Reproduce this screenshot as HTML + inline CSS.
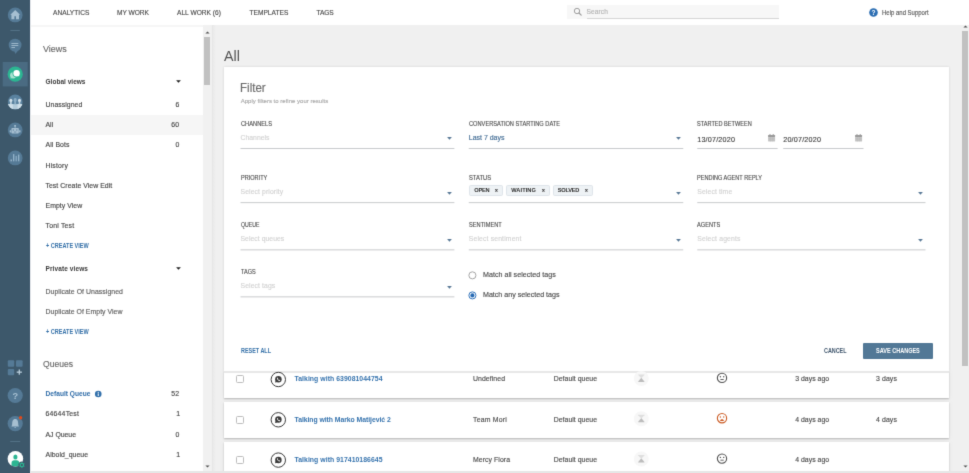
<!DOCTYPE html>
<html><head><meta charset="utf-8"><title>All</title>
<style>
html,body{margin:0;padding:0;}
body{width:969px;height:473px;overflow:hidden;position:relative;background:#f0f0f0;font-family:"Liberation Sans", sans-serif;}
.t{position:absolute;white-space:nowrap;font-family:"Liberation Sans", sans-serif;-webkit-text-stroke:0.14px;}
.b{position:absolute;}
svg{position:absolute;overflow:visible;}
</style></head><body>
<svg width="0" height="0" style="position:absolute"><defs><filter id="soft" x="0" y="0" width="100%" height="100%" color-interpolation-filters="sRGB"><feConvolveMatrix order="3" kernelMatrix="0.0121 0.0858 0.0121 0.0858 0.6084 0.0858 0.0121 0.0858 0.0121" edgeMode="duplicate" preserveAlpha="true"/></filter></defs></svg>
<div id="page" style="position:absolute;left:0;top:0;width:969px;height:473px;overflow:hidden;background:#f0f0f0;filter:url(#soft);">
<!-- main bg -->
<div class="b" style="left:211.5px;top:25px;width:757.5px;height:448px;background:#f0f0f0;"></div>
<div class="b" style="left:211.5px;top:25px;width:4px;height:446px;background:linear-gradient(to right,#e5e5e5,#ebebeb 40%,#f0f0f0);"></div>
<!-- top bar -->
<div class="b" style="left:30px;top:0;width:939px;height:25px;background:#fff;"></div>
<div class="b" style="left:30px;top:25px;width:173.3px;height:2px;background:#f6f6f6;"></div>
<!-- search -->
<div class="b" style="left:567px;top:4.5px;width:212.25px;height:14px;background:#f7f7f7;"></div>
<div class="b" style="left:586.5px;top:17.8px;width:192.75px;height:0.9px;background:#d6d6d6;"></div>
<svg style="left:572.5px;top:7px;" width="9" height="9" viewBox="0 0 9 9"><circle cx="4" cy="4" r="2.7" fill="none" stroke="#9a9a9a" stroke-width="0.95"/><path d="M6 6 L8.2 8.2" stroke="#9a9a9a" stroke-width="1.15" stroke-linecap="round"/></svg>
<!-- help icon -->
<svg style="left:868.6px;top:8px;" width="9" height="9" viewBox="0 0 9 9"><circle cx="4.5" cy="4.5" r="4.3" fill="#2d6fb3"/><text x="4.5" y="6.9" font-size="6.6" font-weight="700" fill="#fff" text-anchor="middle" font-family="Liberation Sans, sans-serif">?</text></svg>

<!-- sidebar -->
<div class="b" style="left:30px;top:27px;width:173.3px;height:444px;background:#fff;"></div>
<div class="b" style="left:30px;top:115px;width:173.3px;height:19.5px;background:#f6f6f6;"></div>
<!-- sidebar scrollbar -->
<div class="b" style="left:203.3px;top:25px;width:8.2px;height:446px;background:#f1f1f1;"></div>
<div class="b" style="left:204.3px;top:36.8px;width:6.1px;height:47.8px;background:#c1c1c1;"></div>
<svg style="left:205px;top:31px;" width="5" height="3" viewBox="0 0 5 3"><path d="M0.4 2.6 L2.5 0.4 L4.6 2.6 Z" fill="#505050"/></svg>
<svg style="left:205px;top:464.5px;" width="5" height="3" viewBox="0 0 5 3"><path d="M0.4 0.4 L2.5 2.6 L4.6 0.4 Z" fill="#505050"/></svg>
<!-- sidebar carets -->
<svg style="left:175.6px;top:80.3px;" width="5" height="3" viewBox="0 0 5 3"><path d="M0.1 0.2 L4.9 0.2 L2.5 2.7 Z" fill="#1f1f1f"/></svg>
<svg style="left:175.6px;top:267.1px;" width="5" height="3" viewBox="0 0 5 3"><path d="M0.1 0.2 L4.9 0.2 L2.5 2.7 Z" fill="#1f1f1f"/></svg>
<!-- info icon -->
<svg style="left:94px;top:390px;" width="9" height="9" viewBox="0 0 9 9"><g transform="translate(0.75 0.5)"><circle cx="3.5" cy="3.5" r="3.3" fill="#3270ab"/><rect x="3" y="2.9" width="1" height="2.6" fill="#fff"/><rect x="3" y="1.4" width="1" height="1" fill="#fff"/></g></svg>

<!-- rows -->
<div class="b row" style="left:224px;top:371px;width:724.6px;height:27px;background:#fff;box-shadow:0 1px 1.5px rgba(0,0,0,.22),0 0 6px rgba(0,0,0,.05);"></div>
<div class="b row" style="left:224px;top:402px;width:724.6px;height:36px;background:#fff;box-shadow:0 1px 1.5px rgba(0,0,0,.22),0 0 6px rgba(0,0,0,.05);"></div>
<div class="b row" style="left:224px;top:442px;width:724.6px;height:36px;background:#fff;box-shadow:0 1px 1.5px rgba(0,0,0,.22),0 0 6px rgba(0,0,0,.05);"></div>

<!-- filter card -->
<div class="b" style="left:224px;top:67px;width:725px;height:304.2px;background:#fff;box-shadow:0 0 2.5px rgba(0,0,0,.13);"></div>
<div class="b" style="left:224px;top:371.1px;width:725px;height:1.6px;background:#e7e7e7;"></div>
<svg class="nb" style="left:0;top:0;" width="969" height="473"><rect x="240.5" y="148.00" width="213.90" height="1.0" fill="#c8cacd"/><rect x="240.5" y="202.12" width="213.90" height="1.0" fill="#c8cacd"/><rect x="240.5" y="249.35" width="213.90" height="1.0" fill="#c8cacd"/><rect x="240.5" y="296.35" width="213.90" height="1.0" fill="#c8cacd"/><rect x="468.75" y="148.00" width="214.50" height="1.0" fill="#c8cacd"/><rect x="468.75" y="202.12" width="214.50" height="1.0" fill="#c8cacd"/><rect x="468.75" y="249.35" width="214.50" height="1.0" fill="#c8cacd"/><rect x="697.25" y="148.00" width="80.35" height="1.0" fill="#c8cacd"/><rect x="783.2" y="148.00" width="80.30" height="1.0" fill="#c8cacd"/><rect x="697.25" y="202.12" width="228.25" height="1.0" fill="#c8cacd"/><rect x="697.25" y="249.35" width="228.25" height="1.0" fill="#c8cacd"/></svg>
<svg style="left:447.3px;top:137.00px;" width="5" height="3" viewBox="0 0 5 3"><path d="M0.1 0.1 L4.9 0.1 L2.5 2.8 Z" fill="#587896"/></svg>
<svg style="left:447.3px;top:191.60px;" width="5" height="3" viewBox="0 0 5 3"><path d="M0.1 0.1 L4.9 0.1 L2.5 2.8 Z" fill="#587896"/></svg>
<svg style="left:447.3px;top:238.70px;" width="5" height="3" viewBox="0 0 5 3"><path d="M0.1 0.1 L4.9 0.1 L2.5 2.8 Z" fill="#587896"/></svg>
<svg style="left:447.3px;top:285.70px;" width="5" height="3" viewBox="0 0 5 3"><path d="M0.1 0.1 L4.9 0.1 L2.5 2.8 Z" fill="#587896"/></svg>
<svg style="left:676px;top:137.00px;" width="5" height="3" viewBox="0 0 5 3"><path d="M0.1 0.1 L4.9 0.1 L2.5 2.8 Z" fill="#587896"/></svg>
<svg style="left:676px;top:191.60px;" width="5" height="3" viewBox="0 0 5 3"><path d="M0.1 0.1 L4.9 0.1 L2.5 2.8 Z" fill="#587896"/></svg>
<svg style="left:676px;top:238.70px;" width="5" height="3" viewBox="0 0 5 3"><path d="M0.1 0.1 L4.9 0.1 L2.5 2.8 Z" fill="#587896"/></svg>
<svg style="left:918.3px;top:191.60px;" width="5" height="3" viewBox="0 0 5 3"><path d="M0.1 0.1 L4.9 0.1 L2.5 2.8 Z" fill="#587896"/></svg>
<svg style="left:918.3px;top:238.70px;" width="5" height="3" viewBox="0 0 5 3"><path d="M0.1 0.1 L4.9 0.1 L2.5 2.8 Z" fill="#587896"/></svg>
<svg style="left:768.1px;top:134.2px;" width="7.2" height="7.7" viewBox="0 0 7.2 7.7">
<rect x="0.1" y="0.9" width="7" height="6.7" rx="0.6" fill="#c6c6c6"/>
<rect x="0.1" y="0.9" width="7" height="2" rx="0.6" fill="#9a9a9a"/>
<rect x="1.4" y="0" width="1.2" height="1.8" rx="0.5" fill="#9a9a9a"/>
<rect x="4.6" y="0" width="1.2" height="1.8" rx="0.5" fill="#9a9a9a"/>
<path d="M2.45 3 V7.5 M4.75 3 V7.5 M0.2 4.6 H7 M0.2 6.1 H7" stroke="#b4b4b4" stroke-width="0.35"/>
</svg>
<svg style="left:854.6px;top:134.2px;" width="7.2" height="7.7" viewBox="0 0 7.2 7.7">
<rect x="0.1" y="0.9" width="7" height="6.7" rx="0.6" fill="#c6c6c6"/>
<rect x="0.1" y="0.9" width="7" height="2" rx="0.6" fill="#9a9a9a"/>
<rect x="1.4" y="0" width="1.2" height="1.8" rx="0.5" fill="#9a9a9a"/>
<rect x="4.6" y="0" width="1.2" height="1.8" rx="0.5" fill="#9a9a9a"/>
<path d="M2.45 3 V7.5 M4.75 3 V7.5 M0.2 4.6 H7 M0.2 6.1 H7" stroke="#b4b4b4" stroke-width="0.35"/>
</svg>
<div class="b" style="left:468.6px;top:185px;width:32.70px;height:9px;background:#eef2f5;border:1px solid #dfe5ea;border-radius:1.6px;"></div>
<svg style="left:495.20px;top:188.9px;" width="2.8" height="2.8" viewBox="0 0 2.8 2.8"><path d="M0.3 0.3 L2.5 2.5 M2.5 0.3 L0.3 2.5" stroke="#2a2a2a" stroke-width="1.05"/></svg>
<div class="b" style="left:506.2px;top:185px;width:41.60px;height:9px;background:#eef2f5;border:1px solid #dfe5ea;border-radius:1.6px;"></div>
<svg style="left:541.60px;top:188.9px;" width="2.8" height="2.8" viewBox="0 0 2.8 2.8"><path d="M0.3 0.3 L2.5 2.5 M2.5 0.3 L0.3 2.5" stroke="#2a2a2a" stroke-width="1.05"/></svg>
<div class="b" style="left:552.7px;top:185px;width:38.30px;height:9px;background:#eef2f5;border:1px solid #dfe5ea;border-radius:1.6px;"></div>
<svg style="left:585.10px;top:188.9px;" width="2.8" height="2.8" viewBox="0 0 2.8 2.8"><path d="M0.3 0.3 L2.5 2.5 M2.5 0.3 L0.3 2.5" stroke="#2a2a2a" stroke-width="1.05"/></svg>
<svg style="left:466px;top:269px;" width="13" height="13" viewBox="0 0 13 13"><circle cx="6.4" cy="6.35" r="3.55" fill="#fff" stroke="#a6a6a6" stroke-width="1"/></svg>
<svg style="left:466px;top:289px;" width="13" height="13" viewBox="0 0 13 13"><circle cx="6.4" cy="6.4" r="3.55" fill="#fff" stroke="#3576bd" stroke-width="1"/><circle cx="6.4" cy="6.4" r="2.05" fill="#2569b3"/></svg>
<div class="b" style="left:863.4px;top:343px;width:69.4px;height:16.4px;background:#527896;border-radius:1px;"></div>
<div class="b" style="left:236.3px;top:375.40px;width:6.1px;height:6.1px;border:1px solid #bcbcbc;border-radius:1.5px;background:#fff;"></div>
<div class="b" style="left:236.3px;top:415.70px;width:6.1px;height:6.1px;border:1px solid #bcbcbc;border-radius:1.5px;background:#fff;"></div>
<div class="b" style="left:236.3px;top:456.00px;width:6.1px;height:6.1px;border:1px solid #bcbcbc;border-radius:1.5px;background:#fff;"></div>
<svg style="left:269px;top:370px;" width="19" height="19" viewBox="0 0 19 19"><g transform="translate(1.30 1.50)">
<circle cx="8" cy="8" r="7.2" fill="#fff" stroke="#3a3a3a" stroke-width="1"/>
<circle cx="8.1" cy="7.8" r="3.25" fill="#3a3a3a"/>
<path d="M4.7 11.1 L5.4 8.9 L7.1 10.6 Z" fill="#3a3a3a"/>
<path d="M6.7 6.4 C6.6 7.8 7.9 9.3 9.5 9.4 L9.9 8.7 L9.1 8.2 L8.7 8.5 C8.2 8.3 7.7 7.8 7.6 7.3 L7.9 6.9 L7.4 6.1 Z" fill="#fff"/>
</g></svg>
<svg style="left:269px;top:410px;" width="19" height="19" viewBox="0 0 19 19"><g transform="translate(1.30 1.80)">
<circle cx="8" cy="8" r="7.2" fill="#fff" stroke="#3a3a3a" stroke-width="1"/>
<circle cx="8.1" cy="7.8" r="3.25" fill="#3a3a3a"/>
<path d="M4.7 11.1 L5.4 8.9 L7.1 10.6 Z" fill="#3a3a3a"/>
<path d="M6.7 6.4 C6.6 7.8 7.9 9.3 9.5 9.4 L9.9 8.7 L9.1 8.2 L8.7 8.5 C8.2 8.3 7.7 7.8 7.6 7.3 L7.9 6.9 L7.4 6.1 Z" fill="#fff"/>
</g></svg>
<svg style="left:269px;top:451px;" width="19" height="19" viewBox="0 0 19 19"><g transform="translate(1.30 1.10)">
<circle cx="8" cy="8" r="7.2" fill="#fff" stroke="#3a3a3a" stroke-width="1"/>
<circle cx="8.1" cy="7.8" r="3.25" fill="#3a3a3a"/>
<path d="M4.7 11.1 L5.4 8.9 L7.1 10.6 Z" fill="#3a3a3a"/>
<path d="M6.7 6.4 C6.6 7.8 7.9 9.3 9.5 9.4 L9.9 8.7 L9.1 8.2 L8.7 8.5 C8.2 8.3 7.7 7.8 7.6 7.3 L7.9 6.9 L7.4 6.1 Z" fill="#fff"/>
</g></svg>
<svg style="left:632px;top:369px;" width="19" height="19" viewBox="0 0 19 19"><g transform="translate(1.60 1.70)">
<circle cx="7.7" cy="7.7" r="7.5" fill="#f7f7f7"/>
<path d="M4.6 3.7 H10.8 V4.2 L7.9 7.3 H7.5 L4.6 4.2 Z" fill="#dedede"/>
<path d="M4.6 11.3 H10.8 V10.8 L7.9 7.3 H7.5 L4.6 10.8 Z" fill="#bcbcbc"/>
</g></svg>
<svg style="left:632px;top:410px;" width="19" height="18" viewBox="0 0 19 18"><g transform="translate(1.60 1.00)">
<circle cx="7.7" cy="7.7" r="7.5" fill="#f7f7f7"/>
<path d="M4.6 3.7 H10.8 V4.2 L7.9 7.3 H7.5 L4.6 4.2 Z" fill="#dedede"/>
<path d="M4.6 11.3 H10.8 V10.8 L7.9 7.3 H7.5 L4.6 10.8 Z" fill="#bcbcbc"/>
</g></svg>
<svg style="left:632px;top:450px;" width="19" height="18" viewBox="0 0 19 18"><g transform="translate(1.60 1.30)">
<circle cx="7.7" cy="7.7" r="7.5" fill="#f7f7f7"/>
<path d="M4.6 3.7 H10.8 V4.2 L7.9 7.3 H7.5 L4.6 4.2 Z" fill="#dedede"/>
<path d="M4.6 11.3 H10.8 V10.8 L7.9 7.3 H7.5 L4.6 10.8 Z" fill="#bcbcbc"/>
</g></svg>
<svg style="left:715px;top:370px;" width="14" height="15" viewBox="0 0 14 15"><g transform="translate(1.00 1.90)">
<circle cx="6" cy="6" r="4.65" fill="#fff" stroke="#505050" stroke-width="1.1"/>
<circle cx="4.4" cy="4.8" r="0.7" fill="#505050"/><circle cx="7.7" cy="4.8" r="0.7" fill="#505050"/>
<rect x="4.4" y="7.1" width="3.3" height="0.9" fill="#505050"/>
</g></svg>
<svg style="left:715px;top:411px;" width="14" height="15" viewBox="0 0 14 15"><g transform="translate(1.00 1.20)">
<circle cx="6" cy="6" r="4.65" fill="#fff" stroke="#cb5a22" stroke-width="1.1"/>
<circle cx="4.4" cy="4.8" r="0.7" fill="#cb5a22"/><circle cx="7.7" cy="4.8" r="0.7" fill="#cb5a22"/>
<path d="M4.1 8.9 C4.1 6.4 7.9 6.4 7.9 8.9 Z" fill="#cb5a22"/>
</g></svg>
<svg style="left:715px;top:451px;" width="14" height="15" viewBox="0 0 14 15"><g transform="translate(1.00 1.60)">
<circle cx="6" cy="6" r="4.65" fill="#fff" stroke="#505050" stroke-width="1.1"/>
<circle cx="4.4" cy="4.8" r="0.7" fill="#505050"/><circle cx="7.7" cy="4.8" r="0.7" fill="#505050"/>
<rect x="4.4" y="7.1" width="3.3" height="0.9" fill="#505050"/>
</g></svg>

<!-- right scrollbar -->
<div class="b" style="left:958px;top:25px;width:11px;height:446px;background:#f0f0f0;"></div>
<div class="b" style="left:962px;top:31.2px;width:6.2px;height:334.6px;background:#c1c1c1;"></div>
<svg style="left:962.8px;top:25.4px;" width="5" height="3" viewBox="0 0 5 3"><path d="M0.4 2.6 L2.5 0.4 L4.6 2.6 Z" fill="#505050"/></svg>
<svg style="left:962.8px;top:464.5px;" width="5" height="3" viewBox="0 0 5 3"><path d="M0.4 0.4 L2.5 2.6 L4.6 0.4 Z" fill="#505050"/></svg>

<!-- bottom strip -->
<div class="b" style="left:30px;top:471px;width:939px;height:2px;background:#e6e6e6;"></div>

<!-- left nav -->
<div class="b" style="left:0;top:0;width:30px;height:473px;background:#3d586b;"></div>
<div class="b" style="left:28.6px;top:0;width:1.4px;height:473px;background:linear-gradient(to right,#3d586b,#36506a);"></div><div class="b" style="left:30px;top:0;width:1px;height:473px;background:#eef0f2;"></div>
<svg style="left:0;top:0;" width="30" height="473" viewBox="0 0 30 473">
  <defs>
    <clipPath id="cpPeople"><circle cx="15.2" cy="101.9" r="7.4"/></clipPath>
    <clipPath id="cpAv"><circle cx="15.4" cy="458.7" r="7.8"/></clipPath>
  </defs>
  <!-- home -->
  <circle cx="15.2" cy="14.9" r="7.4" fill="#557a96"/>
  <path d="M15.2 10 L20.1 14.8 L19 14.8 L19 19.2 L16 19.2 L16 16.3 L14.4 16.3 L14.4 19.2 L11.4 19.2 L11.4 14.8 L10.3 14.8 Z" fill="#a6bfd1"/>
  <!-- separator -->
  <rect x="10.4" y="30.1" width="9.4" height="0.9" fill="#56748a"/>
  <!-- chat bubble -->
  <circle cx="15.1" cy="45.1" r="6.4" fill="#557a96"/>
  <path d="M14.2 50.9 L15.5 54.1 L18.2 50 Z" fill="#557a96"/>
  <rect x="11.4" y="43" width="6.9" height="0.9" fill="#a6bfd1"/>
  <rect x="11.4" y="45.05" width="6.9" height="0.9" fill="#a6bfd1"/>
  <rect x="11.4" y="47.1" width="3.6" height="0.9" fill="#a6bfd1"/>
  <!-- active -->
  <rect x="2.7" y="62" width="25" height="24.4" fill="#4a6b82"/>
  <circle cx="15.2" cy="74.2" r="7.6" fill="#2cb592"/>
  <circle cx="13.2" cy="75.3" r="3.1" fill="#a8e1d1"/>
  <path d="M10.5 78.4 L10.8 76.4 L12.5 78 Z" fill="#a8e1d1"/>
  <circle cx="16.6" cy="73.2" r="4.05" fill="#2cb592"/>
  <circle cx="16.6" cy="73.2" r="3.2" fill="#fff"/>
  <path d="M19.3 76.3 L19 74.4 L17.5 75.9 Z" fill="#fff"/>
  <!-- people -->
  <circle cx="15.2" cy="101.9" r="7.4" fill="#5a829f"/>
  <g clip-path="url(#cpPeople)">
    <rect x="7" y="104.1" width="17" height="6" fill="#b4ccdb"/>
    <rect x="7" y="104.1" width="5.8" height="6" fill="#cfdfe9"/>
    <rect x="17.6" y="104.1" width="6" height="6" fill="#cfdfe9"/>
    <ellipse cx="15.2" cy="100" rx="1.55" ry="2.1" fill="#8eafc7"/>
    <rect x="14.3" y="101" width="1.8" height="3.2" fill="#8eafc7"/>
    <ellipse cx="10.9" cy="100.5" rx="1.5" ry="1.7" fill="#d3e1ea"/>
    <rect x="10.1" y="101.5" width="1.6" height="2.7" fill="#c3d6e2"/>
    <ellipse cx="19.5" cy="100.5" rx="1.5" ry="1.7" fill="#d3e1ea"/>
    <rect x="18.7" y="101.5" width="1.6" height="2.7" fill="#c3d6e2"/>
  </g>
  <!-- bot -->
  <circle cx="15.2" cy="129.9" r="7.4" fill="#557a96"/>
  <rect x="14.2" y="125" width="1.8" height="1.8" rx="0.3" fill="#a6bfd1"/>
  <rect x="14.75" y="126.6" width="0.7" height="1.8" fill="#a6bfd1"/>
  <rect x="11.4" y="128.1" width="7.4" height="5.4" rx="0.8" fill="#a6bfd1"/>
  <rect x="9.7" y="130.2" width="1.4" height="2.2" rx="0.4" fill="#a6bfd1"/>
  <rect x="19.1" y="130.2" width="1.4" height="2.2" rx="0.4" fill="#a6bfd1"/>
  <circle cx="13.4" cy="129.9" r="0.75" fill="#6a8ba5"/>
  <circle cx="16.8" cy="129.9" r="0.75" fill="#6a8ba5"/>
  <rect x="13.9" y="131.6" width="2.4" height="0.9" fill="#6a8ba5"/>
  <!-- chart -->
  <circle cx="15.2" cy="157.9" r="7.4" fill="#557a96"/>
  <rect x="10.6" y="159.5" width="1.2" height="1.8" fill="#a6bfd1"/>
  <rect x="13.1" y="154.1" width="1.2" height="7.2" fill="#9ab8cf"/>
  <rect x="15.6" y="155.9" width="1.2" height="5.4" fill="#8eafc8"/>
  <rect x="18.1" y="154.6" width="1.2" height="6.7" fill="#9ab8cf"/>
  <!-- apps + -->
  <rect x="7.8" y="360.3" width="6.4" height="6.4" rx="1" fill="#557a96"/>
  <rect x="16" y="360.3" width="6.6" height="6.4" rx="1" fill="#557a96"/>
  <rect x="7.8" y="368.9" width="6.4" height="6.4" rx="1" fill="#557a96"/>
  <rect x="16.7" y="371.5" width="5.2" height="1.3" fill="#b8cddb"/>
  <rect x="18.65" y="369.5" width="1.3" height="5.2" fill="#b8cddb"/>
  <!-- ? -->
  <circle cx="15.2" cy="395.5" r="7.6" fill="#557a96"/>
  <text x="15.2" y="398.9" font-size="9.2" font-weight="700" fill="#a6bfd1" text-anchor="middle" font-family="Liberation Sans, sans-serif">?</text>
  <!-- bell -->
  <circle cx="15.2" cy="423.6" r="7.6" fill="#557a96"/>
  <path d="M15.2 419 C12.6 419 12.3 421.6 12.2 423.5 C12.1 425.3 11.7 426 11.4 426.6 L19 426.6 C18.7 426 18.3 425.3 18.2 423.5 C18.1 421.6 17.8 419 15.2 419 Z" fill="#a6bfd1"/>
  <rect x="14.3" y="427.1" width="1.8" height="0.9" rx="0.4" fill="#8eafc8"/>
  <circle cx="20.6" cy="417.8" r="1.7" fill="#e2491a"/>
  <!-- separator -->
  <rect x="10.2" y="441" width="10" height="0.9" fill="#56748a"/>
  <!-- avatar -->
  <circle cx="15.4" cy="458.7" r="7.8" fill="#fff"/>
  <g clip-path="url(#cpAv)">
    <ellipse cx="15.4" cy="457" rx="2.1" ry="2.5" fill="#2cb592"/>
    <path d="M11.5 468 L11.5 463 C11.5 461 12.7 460.2 14 460.2 L16.8 460.2 C18.1 460.2 19.3 461 19.3 463 L19.3 468 Z" fill="#2cb592"/>
  </g>
  <circle cx="21.9" cy="465" r="3.5" fill="#3d586b"/>
  <circle cx="21.9" cy="465" r="1.75" fill="none" stroke="#2cb592" stroke-width="1.25"/>
  <g stroke="#2cb592" stroke-width="0.8" stroke-linecap="butt">
    <path d="M21.9 462.1 L21.9 463 M21.9 467 L21.9 467.9 M19.4 463.55 L20.2 464 M23.6 466 L24.4 466.45 M19.4 466.45 L20.2 466 M23.6 464 L24.4 463.55"/>
  </g>
</svg>


<div id="txt" style="position:absolute;left:0;top:0;width:969px;height:473px;will-change:transform;">
<span class="t" id="t0" style="left:53px;top:8px;line-height:9px;font-size:6.6px;font-weight:400;color:#4a4a4a;letter-spacing:0.029px;">ANALYTICS</span>
<span class="t" id="t1" style="left:117px;top:8px;line-height:9px;font-size:6.6px;font-weight:400;color:#4a4a4a;letter-spacing:-0.019px;">MY WORK</span>
<span class="t" id="t2" style="left:177px;top:8px;line-height:9px;font-size:6.6px;font-weight:400;color:#4a4a4a;letter-spacing:0.023px;">ALL WORK (6)</span>
<span class="t" id="t3" style="left:249.5px;top:8px;line-height:9px;font-size:6.6px;font-weight:400;color:#4a4a4a;letter-spacing:0.010px;">TEMPLATES</span>
<span class="t" id="t4" style="left:316.5px;top:8px;line-height:9px;font-size:6.6px;font-weight:400;color:#4a4a4a;letter-spacing:-0.105px;">TAGS</span>
<span class="t" id="t5" style="left:586.5px;top:7px;line-height:9px;font-size:6.6px;font-weight:400;color:#b3b3b3;letter-spacing:0.108px;">Search</span>
<span class="t" id="t6" style="left:882.4px;top:8px;line-height:9px;font-size:6.7px;font-weight:400;color:#585858;transform-origin:0 50%;transform:scaleX(0.8951);">Help and Support</span>
<span class="t" id="t7" style="left:43px;top:42px;line-height:13px;font-size:9.6px;font-weight:400;color:#666;transform-origin:0 50%;transform:scaleX(0.9342);">Views</span>
<span class="t" id="t8" style="left:45.5px;top:77px;line-height:9px;font-size:6.5px;font-weight:700;color:#3a3a3a;letter-spacing:0.022px;-webkit-text-stroke:0;">Global views</span>
<span class="t" id="t9" style="left:45.5px;top:100px;line-height:9px;font-size:6.9px;font-weight:400;color:#454545;letter-spacing:0.036px;">Unassigned</span>
<span class="t" id="t10" style="left:175.5px;top:100px;line-height:9px;font-size:6.9px;font-weight:400;color:#454545;">6</span>
<span class="t" id="t11" style="left:45.5px;top:120px;line-height:9px;font-size:6.9px;font-weight:400;color:#454545;">All</span>
<span class="t" id="t12" style="left:171.25px;top:120px;line-height:9px;font-size:6.9px;font-weight:400;color:#454545;letter-spacing:0.219px;">60</span>
<span class="t" id="t13" style="left:45.5px;top:140px;line-height:9px;font-size:6.9px;font-weight:400;color:#454545;letter-spacing:0.083px;">All Bots</span>
<span class="t" id="t14" style="left:175.5px;top:140px;line-height:9px;font-size:6.9px;font-weight:400;color:#454545;">0</span>
<span class="t" id="t15" style="left:45.5px;top:161px;line-height:9px;font-size:6.9px;font-weight:400;color:#454545;letter-spacing:0.161px;">History</span>
<span class="t" id="t16" style="left:45.5px;top:181px;line-height:9px;font-size:6.9px;font-weight:400;color:#454545;letter-spacing:0.049px;">Test Create View Edit</span>
<span class="t" id="t17" style="left:45.5px;top:201px;line-height:9px;font-size:6.9px;font-weight:400;color:#454545;letter-spacing:0.051px;">Empty View</span>
<span class="t" id="t18" style="left:45.5px;top:221px;line-height:9px;font-size:6.9px;font-weight:400;color:#454545;letter-spacing:0.197px;">Toni Test</span>
<span class="t" id="t19" style="left:45.5px;top:241px;line-height:9px;font-size:6.3px;font-weight:700;color:#3470a8;transform-origin:0 50%;transform:scaleX(0.8778);-webkit-text-stroke:0;">+ CREATE VIEW</span>
<span class="t" id="t20" style="left:45.5px;top:264px;line-height:9px;font-size:6.5px;font-weight:700;color:#3a3a3a;letter-spacing:0.104px;-webkit-text-stroke:0;">Private views</span>
<span class="t" id="t21" style="left:45.5px;top:287px;line-height:9px;font-size:6.9px;font-weight:400;color:#5c5c5c;letter-spacing:0.056px;">Duplicate Of Unassigned</span>
<span class="t" id="t22" style="left:45.5px;top:307px;line-height:9px;font-size:6.9px;font-weight:400;color:#5c5c5c;letter-spacing:0.040px;">Duplicate Of Empty View</span>
<span class="t" id="t23" style="left:45.5px;top:327px;line-height:9px;font-size:6.3px;font-weight:700;color:#3470a8;transform-origin:0 50%;transform:scaleX(0.8778);-webkit-text-stroke:0;">+ CREATE VIEW</span>
<span class="t" id="t24" style="left:43px;top:357px;line-height:13px;font-size:9.6px;font-weight:400;color:#666;transform-origin:0 50%;transform:scaleX(0.8926);">Queues</span>
<span class="t" id="t25" style="left:45.5px;top:389px;line-height:9px;font-size:6.6px;font-weight:700;color:#2f6ca8;letter-spacing:0.024px;-webkit-text-stroke:0;">Default Queue</span>
<span class="t" id="t26" style="left:171.25px;top:389px;line-height:9px;font-size:6.9px;font-weight:400;color:#454545;letter-spacing:0.219px;">52</span>
<span class="t" id="t27" style="left:45.5px;top:409px;line-height:9px;font-size:6.9px;font-weight:400;color:#454545;letter-spacing:0.199px;">64644Test</span>
<span class="t" id="t28" style="left:176.2px;top:409px;line-height:9px;font-size:6.9px;font-weight:400;color:#454545;">1</span>
<span class="t" id="t29" style="left:45.5px;top:430px;line-height:9px;font-size:6.9px;font-weight:400;color:#454545;letter-spacing:-0.021px;">AJ Queue</span>
<span class="t" id="t30" style="left:175.5px;top:430px;line-height:9px;font-size:6.9px;font-weight:400;color:#454545;">0</span>
<span class="t" id="t31" style="left:45.5px;top:450px;line-height:9px;font-size:6.9px;font-weight:400;color:#454545;letter-spacing:0.030px;">Albold_queue</span>
<span class="t" id="t32" style="left:176.2px;top:450px;line-height:9px;font-size:6.9px;font-weight:400;color:#454545;">1</span>
<span class="t" id="t33" style="left:223.6px;top:47px;line-height:18px;font-size:14.6px;font-weight:400;color:#525252;transform-origin:0 50%;transform:scaleX(0.9742);-webkit-text-stroke:0;">All</span>
<span class="t" id="t34" style="left:239.9px;top:80px;line-height:16px;font-size:12.2px;font-weight:400;color:#6a6a6a;transform-origin:0 50%;transform:scaleX(0.9486);">Filter</span>
<span class="t" id="t35" style="left:240.75px;top:97px;line-height:8px;font-size:6.0px;font-weight:400;color:#a8a8a8;letter-spacing:0.013px;">Apply filters to refine your results</span>
<span class="t" id="t36" style="left:240.5px;top:119px;line-height:9px;font-size:6.3px;font-weight:400;color:#4a4a4a;transform-origin:0 50%;transform:scaleX(0.9039);-webkit-text-stroke:0.12px #4a4a4a;">CHANNELS</span>
<span class="t" id="t37" style="left:240.5px;top:133px;line-height:9px;font-size:6.8px;font-weight:400;color:#d2d2d2;letter-spacing:0.037px;">Channels</span>
<span class="t" id="t38" style="left:240.5px;top:173px;line-height:9px;font-size:6.3px;font-weight:400;color:#4a4a4a;transform-origin:0 50%;transform:scaleX(0.8824);-webkit-text-stroke:0.12px #4a4a4a;">PRIORITY</span>
<span class="t" id="t39" style="left:240.5px;top:187px;line-height:9px;font-size:6.8px;font-weight:400;color:#d2d2d2;letter-spacing:0.108px;">Select priority</span>
<span class="t" id="t40" style="left:240.5px;top:220px;line-height:9px;font-size:6.3px;font-weight:400;color:#4a4a4a;transform-origin:0 50%;transform:scaleX(0.8257);-webkit-text-stroke:0.12px #4a4a4a;">QUEUE</span>
<span class="t" id="t41" style="left:240.5px;top:234px;line-height:9px;font-size:6.8px;font-weight:400;color:#d2d2d2;letter-spacing:0.054px;">Select queues</span>
<span class="t" id="t42" style="left:240.5px;top:267px;line-height:9px;font-size:6.3px;font-weight:400;color:#4a4a4a;transform-origin:0 50%;transform:scaleX(0.8839);-webkit-text-stroke:0.12px #4a4a4a;">TAGS</span>
<span class="t" id="t43" style="left:240.5px;top:281px;line-height:9px;font-size:6.8px;font-weight:400;color:#d2d2d2;letter-spacing:0.106px;">Select tags</span>
<span class="t" id="t44" style="left:468.75px;top:119px;line-height:9px;font-size:6.3px;font-weight:400;color:#4a4a4a;transform-origin:0 50%;transform:scaleX(0.9010);-webkit-text-stroke:0.12px #4a4a4a;">CONVERSATION STARTING DATE</span>
<span class="t" id="t45" style="left:468.75px;top:133px;line-height:9px;font-size:7.0px;font-weight:400;color:#3f6a93;letter-spacing:-0.006px;">Last 7 days</span>
<span class="t" id="t46" style="left:468.75px;top:173px;line-height:9px;font-size:6.3px;font-weight:400;color:#4a4a4a;transform-origin:0 50%;transform:scaleX(0.9203);-webkit-text-stroke:0.12px #4a4a4a;">STATUS</span>
<span class="t" id="t47" style="left:474.25px;top:186px;line-height:8px;font-size:5.7px;font-weight:700;color:#2c2c2c;letter-spacing:-0.250px;-webkit-text-stroke:0;">OPEN</span>
<span class="t" id="t48" style="left:511.25px;top:186px;line-height:8px;font-size:5.7px;font-weight:700;color:#2c2c2c;letter-spacing:0.065px;-webkit-text-stroke:0;">WAITING</span>
<span class="t" id="t49" style="left:557.75px;top:186px;line-height:8px;font-size:5.7px;font-weight:700;color:#2c2c2c;letter-spacing:-0.267px;-webkit-text-stroke:0;">SOLVED</span>
<span class="t" id="t50" style="left:468.75px;top:220px;line-height:9px;font-size:6.3px;font-weight:400;color:#4a4a4a;transform-origin:0 50%;transform:scaleX(0.9000);-webkit-text-stroke:0.12px #4a4a4a;">SENTIMENT</span>
<span class="t" id="t51" style="left:468.75px;top:234px;line-height:9px;font-size:6.8px;font-weight:400;color:#d2d2d2;letter-spacing:0.161px;">Select sentiment</span>
<span class="t" id="t52" style="left:483px;top:270px;line-height:10px;font-size:7.1px;font-weight:400;color:#4a4a4a;letter-spacing:0.026px;">Match all selected tags</span>
<span class="t" id="t53" style="left:483px;top:290px;line-height:10px;font-size:7.1px;font-weight:400;color:#4a4a4a;letter-spacing:0.000px;">Match any selected tags</span>
<span class="t" id="t54" style="left:697.25px;top:119px;line-height:9px;font-size:6.3px;font-weight:400;color:#4a4a4a;transform-origin:0 50%;transform:scaleX(0.8873);-webkit-text-stroke:0.12px #4a4a4a;">STARTED BETWEEN</span>
<span class="t" id="t55" style="left:697.25px;top:134px;line-height:11px;font-size:7.2px;font-weight:400;color:#3a3a3a;letter-spacing:0.186px;-webkit-text-stroke:0.12px #3a3a3a;">13/07/2020</span>
<span class="t" id="t56" style="left:783.25px;top:134px;line-height:11px;font-size:7.2px;font-weight:400;color:#3a3a3a;letter-spacing:0.186px;-webkit-text-stroke:0.12px #3a3a3a;">20/07/2020</span>
<span class="t" id="t57" style="left:697.25px;top:173px;line-height:9px;font-size:6.3px;font-weight:400;color:#4a4a4a;transform-origin:0 50%;transform:scaleX(0.8830);-webkit-text-stroke:0.12px #4a4a4a;">PENDING AGENT REPLY</span>
<span class="t" id="t58" style="left:697.25px;top:187px;line-height:9px;font-size:6.8px;font-weight:400;color:#d2d2d2;letter-spacing:0.131px;">Select time</span>
<span class="t" id="t59" style="left:697.25px;top:220px;line-height:9px;font-size:6.3px;font-weight:400;color:#4a4a4a;transform-origin:0 50%;transform:scaleX(0.8975);-webkit-text-stroke:0.12px #4a4a4a;">AGENTS</span>
<span class="t" id="t60" style="left:697.25px;top:234px;line-height:9px;font-size:6.8px;font-weight:400;color:#d2d2d2;letter-spacing:0.165px;">Select agents</span>
<span class="t" id="t61" style="left:240.75px;top:346px;line-height:9px;font-size:6.3px;font-weight:700;color:#3470a8;transform-origin:0 50%;transform:scaleX(0.8633);-webkit-text-stroke:0;">RESET ALL</span>
<span class="t" id="t62" style="left:823.7px;top:346px;line-height:9px;font-size:6.3px;font-weight:700;color:#3d546b;transform-origin:0 50%;transform:scaleX(0.8590);-webkit-text-stroke:0;">CANCEL</span>
<span class="t" id="t63" style="left:876px;top:346px;line-height:9px;font-size:6.3px;font-weight:700;color:#ffffff;transform-origin:0 50%;transform:scaleX(0.8774);-webkit-text-stroke:0;">SAVE CHANGES</span>
<span class="t" id="t64" style="left:294.5px;top:374px;line-height:9px;font-size:6.85px;font-weight:700;color:#3472ad;letter-spacing:0.057px;-webkit-text-stroke:0;">Talking with 639081044754</span>
<span class="t" id="t65" style="left:473px;top:374px;line-height:9px;font-size:6.9px;font-weight:400;color:#4a4a4a;letter-spacing:0.068px;">Undefined</span>
<span class="t" id="t66" style="left:553.75px;top:374px;line-height:9px;font-size:6.9px;font-weight:400;color:#4a4a4a;letter-spacing:0.026px;">Default queue</span>
<span class="t" id="t67" style="left:795.2px;top:374px;line-height:9px;font-size:6.9px;font-weight:400;color:#4a4a4a;letter-spacing:0.019px;">3 days ago</span>
<span class="t" id="t68" style="left:876px;top:374px;line-height:9px;font-size:6.9px;font-weight:400;color:#4a4a4a;letter-spacing:0.107px;">3 days</span>
<span class="t" id="t69" style="left:294.5px;top:415px;line-height:9px;font-size:6.85px;font-weight:700;color:#3472ad;letter-spacing:-0.047px;-webkit-text-stroke:0;">Talking with Marko Matijević 2</span>
<span class="t" id="t70" style="left:473px;top:415px;line-height:9px;font-size:6.9px;font-weight:400;color:#4a4a4a;letter-spacing:0.215px;">Team Mori</span>
<span class="t" id="t71" style="left:553.75px;top:415px;line-height:9px;font-size:6.9px;font-weight:400;color:#4a4a4a;letter-spacing:0.026px;">Default queue</span>
<span class="t" id="t72" style="left:795.2px;top:415px;line-height:9px;font-size:6.9px;font-weight:400;color:#4a4a4a;letter-spacing:0.019px;">4 days ago</span>
<span class="t" id="t73" style="left:876px;top:415px;line-height:9px;font-size:6.9px;font-weight:400;color:#4a4a4a;letter-spacing:0.107px;">4 days</span>
<span class="t" id="t74" style="left:294.5px;top:455px;line-height:9px;font-size:6.85px;font-weight:700;color:#3472ad;letter-spacing:0.057px;-webkit-text-stroke:0;">Talking with 917410186645</span>
<span class="t" id="t75" style="left:473px;top:455px;line-height:9px;font-size:6.9px;font-weight:400;color:#4a4a4a;letter-spacing:0.060px;">Mercy Flora</span>
<span class="t" id="t76" style="left:553.75px;top:455px;line-height:9px;font-size:6.9px;font-weight:400;color:#4a4a4a;letter-spacing:0.026px;">Default queue</span>
<span class="t" id="t77" style="left:795.2px;top:455px;line-height:9px;font-size:6.9px;font-weight:400;color:#4a4a4a;letter-spacing:0.019px;">4 days ago</span>
</div>
</div>
</body></html>
